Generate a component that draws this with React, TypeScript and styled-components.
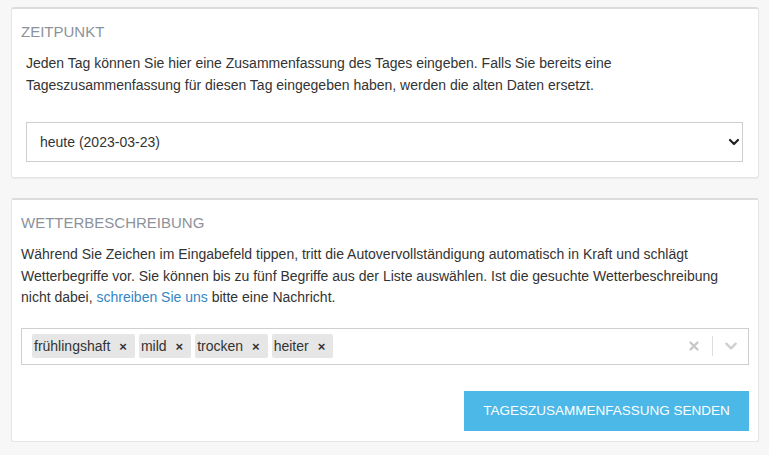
import React from "react";
import styled, { createGlobalStyle } from "styled-components";

const Global = createGlobalStyle`
  html, body { margin: 0; padding: 0; background: #f7f7f7; }
  body { font-family: "Liberation Sans", Arial, sans-serif; color: #333; }
  * { box-sizing: border-box; }
`;

const Page = styled.div`
  padding: 7px 10px 0 11px;
  display: flex;
  flex-direction: column;
  gap: 20px;
  width: 769px;
`;

const Panel = styled.section`
  background: #fff;
  border: 1px solid #e6e6e6;
  border-top: 2px solid #dcdcdc;
  border-radius: 3px;
  box-shadow: 0 1px 1px rgba(0, 0, 0, 0.05);
  padding: 11px 9px 10px 9px;
`;

const Heading = styled.h2`
  margin: 0 0 9px;
  font-size: 15px;
  font-weight: 400;
  line-height: 24px;
  color: #8c929b;
  text-transform: uppercase;
`;

const Body = styled.div<{ $inset?: boolean }>`
  padding: 0 ${(p) => (p.$inset ? "6px" : "0")} 5px ${(p) => (p.$inset ? "5px" : "0")};
`;

const Text = styled.p<{ $gap: number }>`
  margin: 0 0 ${(p) => p.$gap}px;
  font-size: 14px;
  line-height: 21.6px;
  color: #333;
`;

const Link = styled.a`
  color: #3585c5;
  text-decoration: none;
`;

const SelectBox = styled.div`
  height: 40px;
  border: 1px solid #cfcfcf;
  display: flex;
  align-items: center;
  justify-content: space-between;
  padding: 0 2px 0 13px;
  font-size: 14px;
  color: #333;
  background: #fff;
`;

const TagBox = styled.div`
  height: 37px;
  border: 1px solid #cfcfcf;
  display: flex;
  align-items: center;
  padding: 0 10px 0 10px;
  background: #fff;
`;

const Tags = styled.div`
  display: flex;
  gap: 4px;
  flex: 1;
`;

const Tag = styled.span`
  display: inline-flex;
  align-items: center;
  height: 24px;
  background: #e6e6e6;
  border-radius: 2px;
  padding: 0 8px 0 2px;
  font-size: 14px;
  color: #333;
  gap: 9px;
`;

const TagX = styled.span`
  font-size: 13px;
  font-weight: 700;
  color: #333;
  line-height: 1;
`;

const Indicators = styled.div`
  display: flex;
  align-items: center;
`;

const Sep = styled.span`
  width: 1px;
  height: 20px;
  background: #ddd;
  margin: 0 11px 0 12px;
`;

const Footer = styled.div`
  display: flex;
  justify-content: flex-end;
  padding-top: 26px;
`;

const Button = styled.button`
  height: 40px;
  width: 285px;
  border: none;
  background: #4bb8e7;
  color: #fff;
  font-family: "Liberation Sans", Arial, sans-serif;
  font-size: 13.5px;
  text-transform: uppercase;
`;

const Chevron = ({ color, size, sw }: { color: string; size: number; sw: number }) => (
  <svg width={size} height={size} viewBox="0 0 12 12">
    <path d="M2 4 L6 8 L10 4" fill="none" stroke={color} strokeWidth={sw} strokeLinecap="round" strokeLinejoin="round" />
  </svg>
);

const Cross = () => (
  <svg width="12" height="12" viewBox="0 0 12 12" style={{ filter: "blur(0.4px)" }}>
    <path d="M2.5 2.5 L9.5 9.5 M9.5 2.5 L2.5 9.5" stroke="#c8c8c8" strokeWidth="2.4" strokeLinecap="round" />
  </svg>
);

export default function App() {
  const tags = ["frühlingshaft", "mild", "trocken", "heiter"];
  return (
    <>
      <Global />
      <Page>
        <Panel>
          <Heading>Zeitpunkt</Heading>
          <Body $inset>
            <Text $gap={26}>
              Jeden Tag können Sie hier eine Zusammenfassung des Tages eingeben. Falls Sie bereits eine
              <br />
              Tageszusammenfassung für diesen Tag eingegeben haben, werden die alten Daten ersetzt.
            </Text>
            <SelectBox>
              <span>heute (2023-03-23)</span>
              <Chevron color="#222" size={12} sw={2.2} />
            </SelectBox>
          </Body>
        </Panel>
        <Panel>
          <Heading>Wetterbeschreibung</Heading>
          <Text $gap={19}>
            Während Sie Zeichen im Eingabefeld tippen, tritt die Autovervollständigung automatisch in Kraft und schlägt
            <br />
            Wetterbegriffe vor. Sie können bis zu fünf Begriffe aus der Liste auswählen. Ist die gesuchte Wetterbeschreibung
            <br />
            nicht dabei, <Link href="#">schreiben Sie uns</Link> bitte eine Nachricht.
          </Text>
          <TagBox>
            <Tags>
              {tags.map((t) => (
                <Tag key={t}>
                  {t}
                  <TagX>×</TagX>
                </Tag>
              ))}
            </Tags>
            <Indicators>
              <Cross />
              <Sep />
              <Chevron color="#cfcfcf" size={14} sw={2} />
            </Indicators>
          </TagBox>
          <Footer>
            <Button>Tageszusammenfassung senden</Button>
          </Footer>
        </Panel>
      </Page>
    </>
  );
}
